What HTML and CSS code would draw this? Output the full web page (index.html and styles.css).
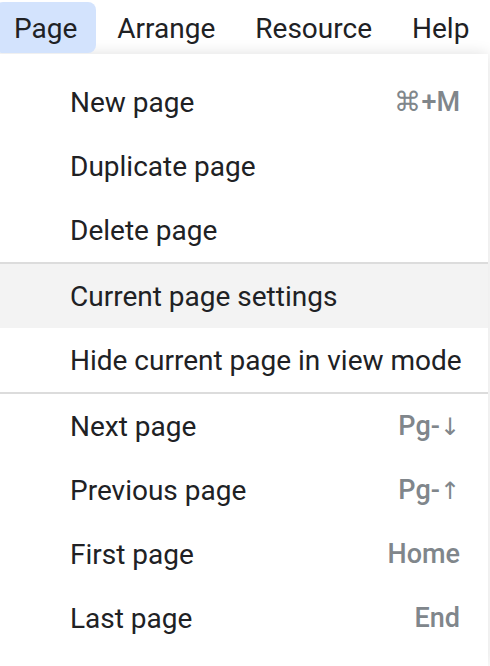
FILE: index.html
```html
<!DOCTYPE html>
<html lang="en">
<head>
    <meta charset="UTF-8">
    <meta name="viewport" content="width=device-width, initial-scale=1.0">
    <title>Page menu</title>
    <link rel="stylesheet" href="styles.css">
</head>
<body>
<div class="menubar">
    <div class="menubar-item active">Page</div>
    <div class="menubar-item">Arrange</div>
    <div class="menubar-item">Resource</div>
    <div class="menubar-item">Help</div>
</div>

<!-- Page dropdown -->
<div class="dropdown">
    <div class="menu-item"><span>New page</span><span class="shortcut">&#8984;+M</span></div>
    <div class="menu-item"><span>Duplicate page</span></div>
    <div class="menu-item"><span>Delete page</span></div>
    <div class="separator"></div>
    <div class="menu-item hover"><span>Current page settings</span></div>
    <div class="menu-item"><span>Hide current page in view mode</span></div>
    <div class="separator"></div>
    <div class="menu-item"><span>Next page</span><span class="shortcut">Pg-<span class="arrow">&#8595;</span></span></div>
    <div class="menu-item"><span>Previous page</span><span class="shortcut">Pg-<span class="arrow">&#8593;</span></span></div>
    <div class="menu-item"><span>First page</span><span class="shortcut">Home</span></div>
    <div class="menu-item"><span>Last page</span><span class="shortcut">End</span></div>
</div>
</body>
</html>
```

FILE: styles.css
```css
body {
    font-family: Roboto, "Liberation Sans", Arial, sans-serif;
    background-color: #fff;
    color: #202124;
    margin: 0;
    overflow: hidden;
}
.menubar {
    display: flex;
    gap: 2px;
    height: 51px;
    padding: 2px 0 1px;
    margin-left: -5px;
    font-size: 28px;
}
.menubar-item {
    display: flex;
    align-items: center;
    padding: 2px 19px 0;
    border-radius: 8px;
}
.menubar-item.active {
    background: #d3e3fd;
}
.dropdown {
    background: white;
    margin: 0 2px 0 -10px;
    padding: 16px 0;
    box-shadow: 0 0 14px rgba(0, 0, 0, 0.13);
    font-size: 28px;
}
.menu-item {
    display: flex;
    justify-content: space-between;
    align-items: center;
    height: 64px;
    padding: 0 28px 0 80px;
    white-space: nowrap;
}
.menu-item.hover {
    background: #f3f3f3;
}
.shortcut {
    color: #80868b;
    font-weight: 500;
    font-size: 27px;
}
.arrow {
    font-family: "DejaVu Sans", sans-serif;
    font-weight: normal;
    font-size: 24px;
    color: #80868b;
}
.separator {
    height: 2px;
    background: #dcdcdc;
}
```
